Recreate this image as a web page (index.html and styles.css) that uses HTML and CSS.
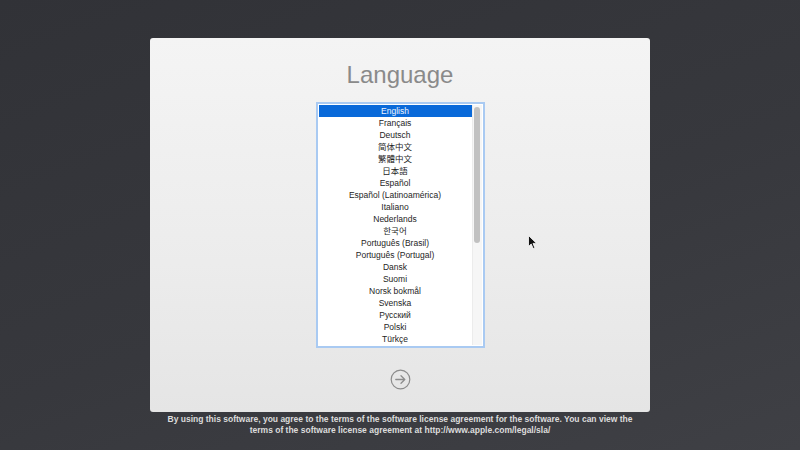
FILE: index.html
```html
<!DOCTYPE html>
<html lang="en">
<head>
<meta charset="utf-8">
<title>Language</title>
<link rel="stylesheet" href="styles.css">
</head>
<body>
<div class="screen">
  <div class="panel">
    <h1 class="title">Language</h1>
    <div class="listbox">
      <ul class="rows">
        <li class="row selected">English</li>
        <li class="row">Français</li>
        <li class="row">Deutsch</li>
        <li class="row">简体中文</li>
        <li class="row">繁體中文</li>
        <li class="row">日本語</li>
        <li class="row">Español</li>
        <li class="row">Español (Latinoamérica)</li>
        <li class="row">Italiano</li>
        <li class="row">Nederlands</li>
        <li class="row">한국어</li>
        <li class="row">Português (Brasil)</li>
        <li class="row">Português (Portugal)</li>
        <li class="row">Dansk</li>
        <li class="row">Suomi</li>
        <li class="row">Norsk bokmål</li>
        <li class="row">Svenska</li>
        <li class="row">Русский</li>
        <li class="row">Polski</li>
        <li class="row">Türkçe</li>
      </ul>
      <div class="scrollbar"><div class="thumb"></div></div>
    </div>
    <button class="next" aria-label="Continue">
      <svg width="21" height="21" viewBox="0 0 21 21">
        <circle cx="10.5" cy="10.5" r="9.3" fill="none" stroke="#8c8c8c" stroke-width="1.2"/>
        <path d="M5.8 10.5 H14.8 M11 6.8 L14.8 10.5 L11 14.2" fill="none" stroke="#8c8c8c" stroke-width="1.3" stroke-linecap="round" stroke-linejoin="round"/>
      </svg>
    </button>
  </div>
  <p class="license">By using this software, you agree to the terms of the software license agreement for the software. You can view the<br>terms of the software license agreement at http://www.apple.com/legal/sla/</p>
  <svg class="cursor" width="10" height="15" viewBox="0 0 10 15">
    <path d="M0.5 0.5 L0.5 11.5 L3.2 9 L5.2 13.6 L6.9 12.9 L5 8.4 L8.6 8.4 Z" fill="#111" stroke="#fff" stroke-width="0.8"/>
  </svg>
</div>
</body>
</html>
```
FILE: styles.css
```css
html, body {
  margin: 0;
  padding: 0;
}
body {
  width: 800px;
  height: 450px;
  overflow: hidden;
  background: linear-gradient(160deg, #313237 0%, #37383d 55%, #3f4045 100%);
  font-family: "Liberation Sans", Arial, "Noto Sans CJK SC", sans-serif;
}
.screen {
  position: relative;
  height: 450px;
  display: flex;
  flex-direction: column;
  align-items: center;
}
.panel {
  margin-top: 38px;
  width: 500px;
  height: 374px;
  box-sizing: border-box;
  border-radius: 3px;
  background: linear-gradient(180deg, #f4f4f4 0%, #ececec 60%, #e5e5e5 100%);
  display: flex;
  flex-direction: column;
  align-items: center;
  padding-top: 23px;
}
.title {
  margin: 0;
  font-weight: normal;
  font-size: 24px;
  line-height: 28px;
  color: #8a8a8a;
  font-family: "Liberation Sans", Arial, sans-serif;
}
.listbox {
  margin-top: 13px;
  width: 169px;
  height: 246px;
  box-sizing: border-box;
  border: 2px solid #a9caf2;
  padding: 1px;
  background: #fff;
  display: flex;
}
.rows {
  list-style: none;
  margin: 0;
  padding: 0;
  flex: 1;
}
.row {
  height: 12px;
  line-height: 12px;
  font-size: 8.5px;
  text-align: center;
  color: #252525;
  white-space: nowrap;
  font-family: "Liberation Sans", Arial, "Noto Sans CJK SC", sans-serif;
}
.row.selected {
  background: #0969d9;
  color: #eef4ff;
}
.scrollbar {
  width: 10px;
  background: #f6f6f6;
  border-left: 1px solid #ececec;
  box-sizing: border-box;
  display: flex;
  justify-content: center;
  padding-top: 2px;
}
.thumb {
  width: 6px;
  height: 136px;
  border-radius: 3px;
  background: #c1c1c1;
}
.next {
  margin-top: 21px;
  padding: 0;
  border: 0;
  background: transparent;
  width: 21px;
  height: 21px;
  display: block;
}
.next svg {
  display: block;
}
.license {
  margin: 2px 0 0;
  font-size: 8.5px;
  line-height: 11px;
  font-weight: bold;
  color: #dcdcdc;
  text-align: center;
  font-family: "Liberation Sans", Arial, sans-serif;
  white-space: nowrap;
}
.cursor {
  position: absolute;
  left: 528px;
  top: 235px;
}
```
